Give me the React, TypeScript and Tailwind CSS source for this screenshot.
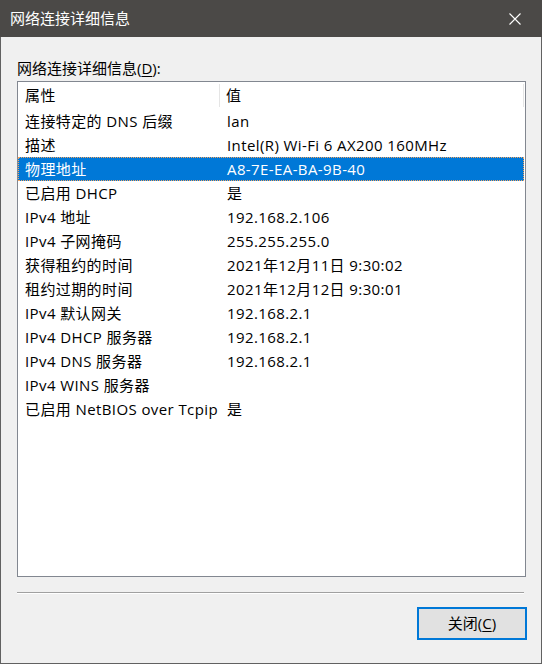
import React from 'react';

const rows = [
  { k: '连接特定的 DNS 后缀', v: 'lan' },
  { k: '描述', v: 'Intel(R) Wi-Fi 6 AX200 160MHz' },
  { k: '物理地址', v: 'A8-7E-EA-BA-9B-40', selected: true },
  { k: '已启用 DHCP', v: '是' },
  { k: 'IPv4 地址', v: '192.168.2.106' },
  { k: 'IPv4 子网掩码', v: '255.255.255.0' },
  { k: '获得租约的时间', v: '2021年12月11日 9:30:02' },
  { k: '租约过期的时间', v: '2021年12月12日 9:30:01' },
  { k: 'IPv4 默认网关', v: '192.168.2.1' },
  { k: 'IPv4 DHCP 服务器', v: '192.168.2.1' },
  { k: 'IPv4 DNS 服务器', v: '192.168.2.1' },
  { k: 'IPv4 WINS 服务器', v: '' },
  { k: '已启用 NetBIOS over Tcpip', v: '是' },
];

const font = { fontFamily: '"Open Sans", "Noto Sans CJK SC", sans-serif' };

export default function App() {
  return (
    <div
      className="w-[542px] h-[664px] flex flex-col bg-[#f0f0f0] text-[15px] text-black overflow-hidden"
      style={font}
    >
      {/* title bar */}
      <div className="h-[37px] shrink-0 bg-[#4b4947] flex items-center justify-between pl-[10px] pr-[21px]">
        <span className="text-white leading-none">网络连接详细信息</span>
        <svg width="12" height="12" viewBox="0 0 12 12" className="text-white">
          <path d="M0.5 0.5 L11.5 11.5 M11.5 0.5 L0.5 11.5" stroke="currentColor" strokeWidth="1.1" />
        </svg>
      </div>

      <div className="flex-1 flex flex-col border-l border-r border-b border-[#616161] pl-[16px] pr-[15px]">
        <div className="h-[44px] flex items-end pb-[5px] leading-none">
          网络连接详细信息(<span className="underline underline-offset-2">D</span>):
        </div>

        {/* list view */}
        <div className="h-[496px] border border-[#828790] bg-white flex flex-col tracking-[0.4px]">
          <div className="h-[27px] flex items-center shrink-0">
            <div className="w-[202px] h-[23px] flex items-center pl-[7px] border-r border-[#e5e5e5]">属性</div>
            <div className="flex-1 h-[23px] flex items-center pl-[6px] border-r border-[#e5e5e5] mr-[1px]">值</div>
          </div>
          {rows.map((r) => (
            <div
              key={r.k}
              className={
                r.selected
                  ? 'h-[24px] flex items-center bg-[#0078d7] text-white outline outline-1 outline-dotted outline-[#f4a460] -outline-offset-1 mr-[1px]'
                  : 'h-[24px] flex items-center'
              }
            >
              <div className="w-[202px] pl-[7px] whitespace-nowrap">{r.k}</div>
              <div className="pl-[7px] whitespace-nowrap">{r.v}</div>
            </div>
          ))}
        </div>

        {/* etched separator */}
        <div className="mt-[15px] mr-[2px] h-[2px] flex flex-col">
          <div className="h-px bg-[#a0a0a0]" />
          <div className="h-px bg-white" />
        </div>

        <div className="flex justify-end mt-[13px]">
          <button className="w-[110px] h-[33px] border-2 border-[#0078d7] bg-[#e1e1e1] flex items-center justify-center -mr-[1px]">
            关闭(<span className="underline underline-offset-2">C</span>)
          </button>
        </div>
      </div>
    </div>
  );
}
